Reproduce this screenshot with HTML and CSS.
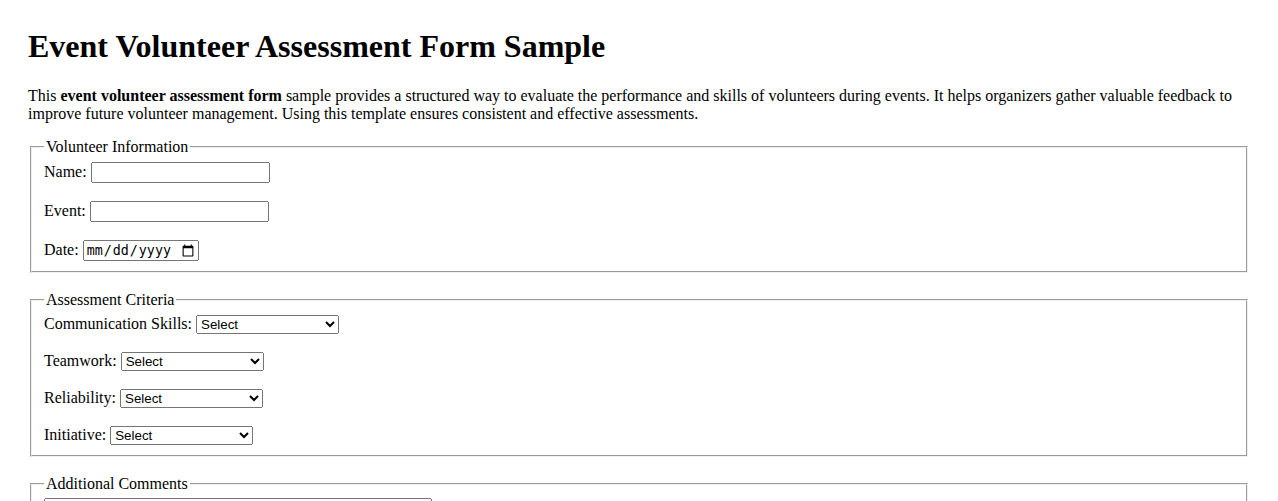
FILE: index.html
```html
<!DOCTYPE html>
<html lang="en">
<head>
  <meta charset="UTF-8">
  <meta name="viewport" content="width=device-width, initial-scale=1.0">
  <title>Event Volunteer Assessment Form Sample</title>
  <link rel="stylesheet" href="styles.css">
</head>
<body>

<h1>Event Volunteer Assessment Form Sample</h1>

<p class="intro">This <strong>event volunteer assessment form</strong> sample provides a structured way to evaluate the performance and skills of volunteers during events. It helps organizers gather valuable feedback to improve future volunteer management. Using this template ensures consistent and effective assessments.</p>

<form>
  <!-- Volunteer details -->
  <fieldset>
    <legend>Volunteer Information</legend>
    <label for="name">Name:</label>
    <input type="text" id="name" name="name"><br><br>
    <label for="event">Event:</label>
    <input type="text" id="event" name="event"><br><br>
    <label for="date">Date:</label>
    <input type="date" id="date" name="date">
  </fieldset>

  <!-- Ratings -->
  <fieldset>
    <legend>Assessment Criteria</legend>
    <label for="communication">Communication Skills:</label>
    <select id="communication" name="communication">
      <option value="">Select</option>
      <option>Excellent</option>
      <option>Good</option>
      <option>Fair</option>
      <option>Needs Improvement</option>
    </select><br><br>
    <label for="teamwork">Teamwork:</label>
    <select id="teamwork" name="teamwork">
      <option value="">Select</option>
      <option>Excellent</option>
      <option>Good</option>
      <option>Fair</option>
      <option>Needs Improvement</option>
    </select><br><br>
    <label for="reliability">Reliability:</label>
    <select id="reliability" name="reliability">
      <option value="">Select</option>
      <option>Excellent</option>
      <option>Good</option>
      <option>Fair</option>
      <option>Needs Improvement</option>
    </select><br><br>
    <label for="initiative">Initiative:</label>
    <select id="initiative" name="initiative">
      <option value="">Select</option>
      <option>Excellent</option>
      <option>Good</option>
      <option>Fair</option>
      <option>Needs Improvement</option>
    </select>
  </fieldset>

  <!-- Free text -->
  <fieldset>
    <legend>Additional Comments</legend>
    <textarea id="comments" name="comments" rows="5" cols="50"></textarea>
  </fieldset>

  <button type="submit">Submit Assessment</button>
</form>

</body>
</html>
```

FILE: styles.css
```css
body {
    font-family: "Liberation Serif", "Times New Roman", serif;
    margin: 0;
    padding: 0 28px 28px;
}
h1 {
    margin: 28px 0 22px;
}
.intro {
    margin-bottom: 15px;
}
fieldset {
    margin: 0 2px 18px;
}
input[type="text"] {
    width: 171px;
}
input[type="date"] {
    width: 111px;
}
textarea {
    width: 382px;
}
```
